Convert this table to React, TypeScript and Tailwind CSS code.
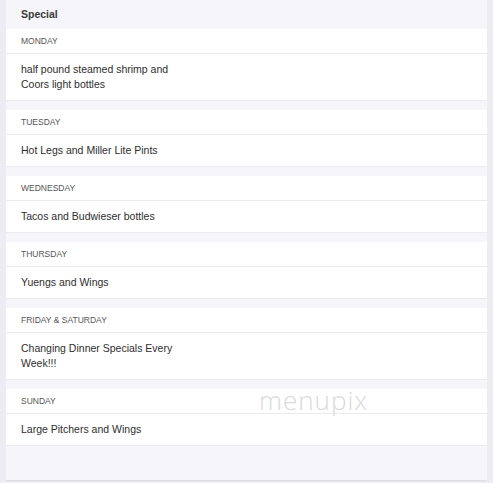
import React from 'react';

const specials = [
  { day: 'MONDAY', text: 'half pound steamed shrimp and Coors light bottles' },
  { day: 'TUESDAY', text: 'Hot Legs and Miller Lite Pints' },
  { day: 'WEDNESDAY', text: 'Tacos and Budwieser bottles' },
  { day: 'THURSDAY', text: 'Yuengs and Wings' },
  { day: 'FRIDAY & SATURDAY', text: 'Changing Dinner Specials Every Week!!!' },
  { day: 'SUNDAY', text: 'Large Pitchers and Wings' },
];

export default function App() {
  return (
    <div className="w-[493px] h-[483px] bg-[#ececf2] flex font-['Liberation_Sans',Arial,sans-serif] overflow-hidden">
      <div className="relative ml-[6px] w-[481px] h-[481px] bg-[#f5f5fa] border-b border-[#dcdce4] flex flex-col">
        {/* HEADER */}
        <div className="h-[29px] flex items-center pl-[15px]">
          <h2 className="text-[10.5px] font-bold text-[#3a3a3a]">Special</h2>
        </div>
        {/* DAYS */}
        <div className="flex flex-col gap-[9px]">
          {specials.map((s) => (
            <div key={s.day} className="bg-white border-b border-[#ebebf0]">
              <div className="h-[25px] flex items-center pl-[15px] border-b border-[#ebebf0]">
                <p className="text-[8.5px] text-[#555]">{s.day}</p>
              </div>
              <div className="py-[8px] pl-[15px]">
                <p className="max-w-[172px] text-[10.5px] leading-[15px] text-[#2e2e2e]">{s.text}</p>
              </div>
            </div>
          ))}
        </div>
        {/* WATERMARK */}
        <span className="absolute left-[253px] top-[381px] text-[26px] font-light tracking-[1px] text-[#dadada] font-['Open_Sans',sans-serif] pointer-events-none">
          menupix
        </span>
      </div>
    </div>
  );
}
